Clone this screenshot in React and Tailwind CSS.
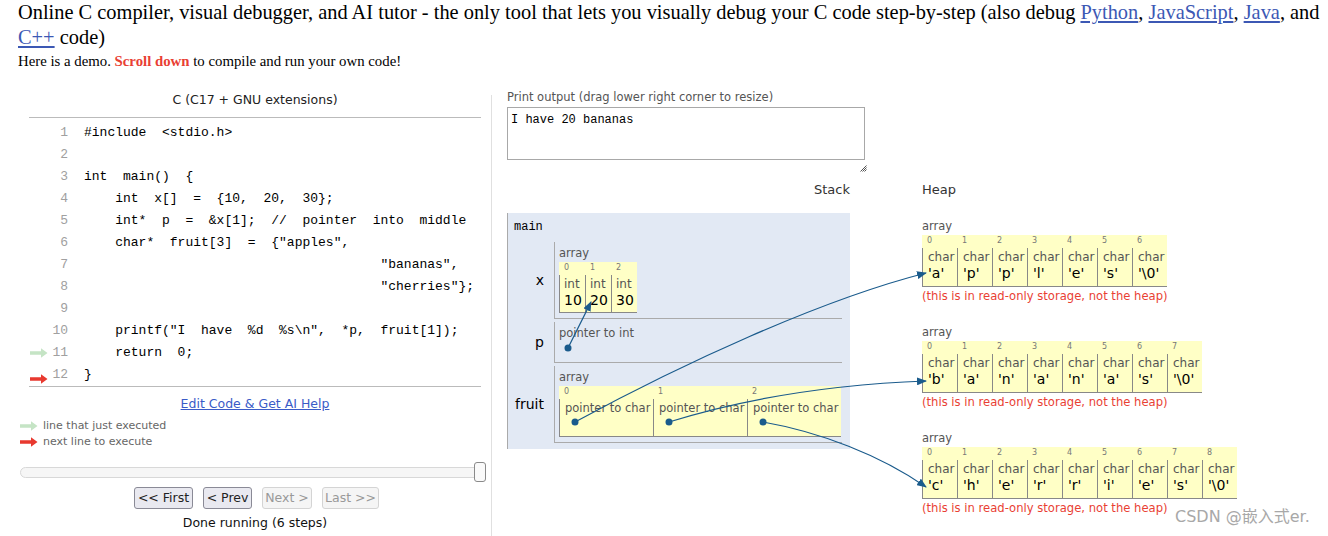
import React from 'react';

const codeLines = [
  '#include  <stdio.h>',
  '',
  'int  main()  {',
  '    int  x[]  =  {10,  20,  30};',
  '    int*  p  =  &x[1];  //  pointer  into  middle',
  '    char*  fruit[3]  =  {"apples",',
  '                                      "bananas",',
  '                                      "cherries"};',
  '',
  '    printf("I  have  %d  %s\\n",  *p,  fruit[1]);',
  '    return  0;',
  '}',
];

const heapArrays = [
  ["'a'", "'p'", "'p'", "'l'", "'e'", "'s'", "'\\0'"],
  ["'b'", "'a'", "'n'", "'a'", "'n'", "'a'", "'s'", "'\\0'"],
  ["'c'", "'h'", "'e'", "'r'", "'r'", "'i'", "'e'", "'s'", "'\\0'"],
];

// little block arrow used in the code gutter and legend
const LineArrow = ({ color }) => (
  <svg width="18" height="10" viewBox="0 0 18 10">
    <path d="M0 3.2 H11 V0.3 L17.5 5 L11 9.7 V6.8 H0 Z" fill={color} />
  </svg>
);

const HeapArray = ({ chars }) => (
  <div className="flex flex-col">
    <div className="h-[14px] text-[11.5px] leading-[14px] text-[#555]">array</div>
    <div className="mt-[2px] flex self-start bg-[#ffffc6]">
      {chars.map((c, i) => (
        <div key={i} className="flex w-[35px] flex-col">
          <div className="h-[13px] pl-[5px] text-[8px] leading-[11px] text-[#777]">{i}</div>
          <div className="h-[39px] border-b border-l border-[#888] pl-[5px]">
            <div className="pt-[1px] text-[12px] leading-[16px] text-[#555]">char</div>
            <div className="text-[14px] leading-[16px] text-black">{c}</div>
          </div>
        </div>
      ))}
    </div>
    <div className="mt-[2px] text-[11.6px] leading-[14px] text-[#e93f34]">
      (this is in read-only storage, not the heap)
    </div>
  </div>
);

export default function App() {
  return (
    <div className="relative h-[536px] w-[1328px] overflow-hidden bg-white font-['DejaVu_Sans',sans-serif] text-black">
      {/* Header */}
      <div className="pl-[18px] font-['Liberation_Serif',serif]">
        <h1 className="whitespace-nowrap text-[20.4px] leading-[25px] font-normal">
          Online C compiler, visual debugger, and AI tutor - the only tool that lets you visually debug your C code step-by-step (also debug{' '}
          <a className="text-[#3c58b4] underline">Python</a>, <a className="text-[#3c58b4] underline">JavaScript</a>,{' '}
          <a className="text-[#3c58b4] underline">Java</a>, and
          <br />
          <a className="text-[#3c58b4] underline">C++</a> code)
        </h1>
        <p className="mt-[1px] text-[14.8px] leading-[20px]">
          Here is a demo. <span className="font-bold text-[#e93f34]">Scroll down</span> to compile and run your own code!
        </p>
      </div>

      {/* Main row */}
      <div className="mt-[15px] flex">
        {/* Left: code + controls */}
        <div className="flex w-[491px] shrink-0 flex-col pl-[20px] pt-[5px]">
          <div className="ml-[9px] w-[452px] pb-[8px] text-center text-[12.5px] leading-[18px] text-[#222]">
            C (C17 + GNU extensions)
          </div>
          <div className="ml-[9px] w-[452px] border-t border-b border-[#bbb] pt-[4px]">
            {codeLines.map((line, i) => (
              <div key={i} className="flex h-[22px] items-center">
                <div className="ml-px flex w-[18px] items-center">
                  {i === 10 && <LineArrow color="#c5e4c5" />}
                  {i === 11 && (
                    <div className="mt-[8px]">
                      <LineArrow color="#e8392f" />
                    </div>
                  )}
                </div>
                <div className="w-[20px] text-right font-['Liberation_Mono',monospace] text-[13px] text-[#a0a0a0]">
                  {i + 1}
                </div>
                <pre className="ml-[16px] font-['Liberation_Mono',monospace] text-[13px] leading-[22px] text-black">
                  {line}
                </pre>
              </div>
            ))}
          </div>
          <div className="mt-[8px] ml-[9px] w-[452px] text-center text-[12.5px] leading-[18px]">
            <a className="text-[#3a5bc7] underline">Edit Code &amp; Get AI Help</a>
          </div>
          <div className="mt-[5px] flex flex-col text-[11px] leading-[16px] text-[#666]">
            <div className="flex items-center gap-[5px]">
              <LineArrow color="#c5e4c5" />
              <span>line that just executed</span>
            </div>
            <div className="flex items-center gap-[5px]">
              <LineArrow color="#e8392f" />
              <span>next line to execute</span>
            </div>
          </div>
          <div className="relative mt-[12px] flex h-[20px] w-[466px] items-center">
            <div className="h-[11px] w-full rounded-full border border-[#d8d8d8] bg-[#f6f6f6]" />
            <div className="absolute top-0 right-0 h-[20px] w-[12px] rounded-[3px] border border-[#8a8a8a] bg-[#fafafa]" />
          </div>
          <div className="mt-[5px] ml-[114px] flex gap-[10px] text-[12.5px]">
            <button className="h-[22px] w-[59px] rounded-[3px] border border-[#8a8a96] bg-[#e9e9f0] text-[#222]">&lt;&lt; First</button>
            <button className="h-[22px] w-[49px] rounded-[3px] border border-[#8a8a96] bg-[#e9e9f0] text-[#222]">&lt; Prev</button>
            <button className="h-[22px] w-[50px] rounded-[3px] border border-[#d4d4d4] bg-[#f5f5f5] text-[#999]">Next &gt;</button>
            <button className="h-[22px] w-[57px] rounded-[3px] border border-[#d4d4d4] bg-[#f5f5f5] text-[#999]">Last &gt;&gt;</button>
          </div>
          <div className="mt-[5px] w-[470px] text-center text-[12.5px] leading-[18px] text-[#111]">
            Done running (6 steps)
          </div>
        </div>

        {/* Divider */}
        <div className="mt-[9px] h-[460px] w-px bg-[#e0e0e0]" />

        {/* Right: output + visualization */}
        <div className="flex flex-col pl-[15px] pt-[4px]">
          <div className="text-[11.5px] leading-[14px] text-[#555]">Print output (drag lower right corner to resize)</div>
          <div className="mt-[3px] h-[53px] w-[358px] border border-[#a8a8a8] px-[3px] pt-[4px] font-['Liberation_Mono',monospace] text-[12px] leading-[16px]">
            I have 20 bananas
          </div>
          <div className="mt-[5px] ml-[353px]">
            <svg width="7" height="7" viewBox="0 0 7 7">
              <path d="M6.5 0.5 L0.5 6.5 M6.5 2.5 L2.5 6.5 M6.5 4.5 L4.5 6.5" stroke="#555" strokeWidth="1" />
            </svg>
          </div>
          <div className="mt-[10px] flex gap-[72px]">
            {/* Stack */}
            <div className="flex w-[343px] flex-col">
              <div className="h-[16px] text-right text-[13px] leading-[16px] text-[#333]">Stack</div>
              <div className="mt-[15px] border-l border-[#aaa] bg-[#e2e9f4] pt-[7px] pb-[6px] pl-[6px]">
                <div className="font-['Liberation_Mono',monospace] text-[12px] leading-[14px]">main</div>
                <div className="mt-[8px] flex flex-col gap-[3px]">
                  {/* x */}
                  <div className="flex">
                    <div className="flex w-[40px] items-center justify-end pr-[10px] text-[14px]">x</div>
                    <div className="h-[77px] w-[288px] border-b border-l border-[#aaa] pt-[4px] pl-[4px]">
                      <div className="text-[11.5px] leading-[14px] text-[#555]">array</div>
                      <div className="mt-[2px] flex w-[78px] bg-[#ffffc6]">
                        {['10', '20', '30'].map((v, i) => (
                          <div key={i} className="flex w-[26px] flex-col">
                            <div className="h-[13px] pl-[5px] text-[8px] leading-[11px] text-[#777]">{i}</div>
                            <div className="h-[38px] border-b border-l border-[#888] pl-[4px]">
                              <div className="pt-[1px] text-[12px] leading-[16px] text-[#555]">int</div>
                              <div className="text-[14px] leading-[16px]">{v}</div>
                            </div>
                          </div>
                        ))}
                      </div>
                    </div>
                  </div>
                  {/* p */}
                  <div className="flex">
                    <div className="flex w-[40px] items-center justify-end pr-[10px] text-[14px]">p</div>
                    <div className="h-[41px] w-[288px] border-b border-l border-[#aaa] pt-[4px] pl-[4px]">
                      <div className="text-[11.5px] leading-[14px] text-[#555]">pointer to int</div>
                    </div>
                  </div>
                  {/* fruit */}
                  <div className="flex">
                    <div className="flex w-[40px] items-center justify-end pr-[10px] text-[14px]">fruit</div>
                    <div className="h-[77px] w-[288px] border-b border-l border-[#aaa] pt-[4px] pl-[4px]">
                      <div className="text-[11.5px] leading-[14px] text-[#555]">array</div>
                      <div className="mt-[2px] flex w-[282px] bg-[#ffffc6]">
                        {[0, 1, 2].map((i) => (
                          <div key={i} className="flex w-[94px] flex-col">
                            <div className="h-[13px] pl-[5px] text-[8px] leading-[11px] text-[#777]">{i}</div>
                            <div className="h-[38px] border-b border-l border-[#888] pl-[5px]">
                              <div className="whitespace-nowrap pt-[1px] text-[11.5px] leading-[16px] text-[#555]">pointer to char</div>
                            </div>
                          </div>
                        ))}
                      </div>
                    </div>
                  </div>
                </div>
              </div>
            </div>

            {/* Heap */}
            <div className="flex flex-col">
              <div className="h-[16px] text-[13px] leading-[16px] text-[#333]">Heap</div>
              <div className="mt-[15px] flex flex-col gap-[22px] pt-[6px]">
                {heapArrays.map((chars, i) => (
                  <HeapArray key={i} chars={chars} />
                ))}
              </div>
            </div>
          </div>
        </div>
      </div>

      {/* Pointer arrows drawn over the visualization */}
      <svg className="pointer-events-none absolute top-0 left-0" width="1328" height="536">
        <defs>
          <marker id="head" markerUnits="userSpaceOnUse" markerWidth="10" markerHeight="8" refX="9" refY="4" orient="auto">
            <path d="M0 0 L10 4 L0 8 Z" fill="#1a5b8c" />
          </marker>
        </defs>
        <g fill="none" stroke="#1a5b8c" strokeWidth="1.2">
          <path d="M568 348 L591 302" markerEnd="url(#head)" />
          <path d="M575 422 C680 365, 820 300, 926 273" markerEnd="url(#head)" />
          <path d="M669 422 C740 400, 820 385, 926 381" markerEnd="url(#head)" />
          <path d="M763 422 C820 432, 880 455, 926 487" markerEnd="url(#head)" />
        </g>
        <g fill="#1a5b8c">
          <circle cx="568" cy="348" r="3.5" />
          <circle cx="575" cy="422" r="3.5" />
          <circle cx="669" cy="422" r="3.5" />
          <circle cx="763" cy="422" r="3.5" />
        </g>
      </svg>

      {/* watermark */}
      <div className="absolute top-[507px] left-[1175px] font-['DejaVu_Sans','Noto_Sans_CJK_SC',sans-serif] text-[16px] leading-[20px] text-[#a8a8a8]">
        CSDN @嵌入式er.
      </div>
    </div>
  );
}
